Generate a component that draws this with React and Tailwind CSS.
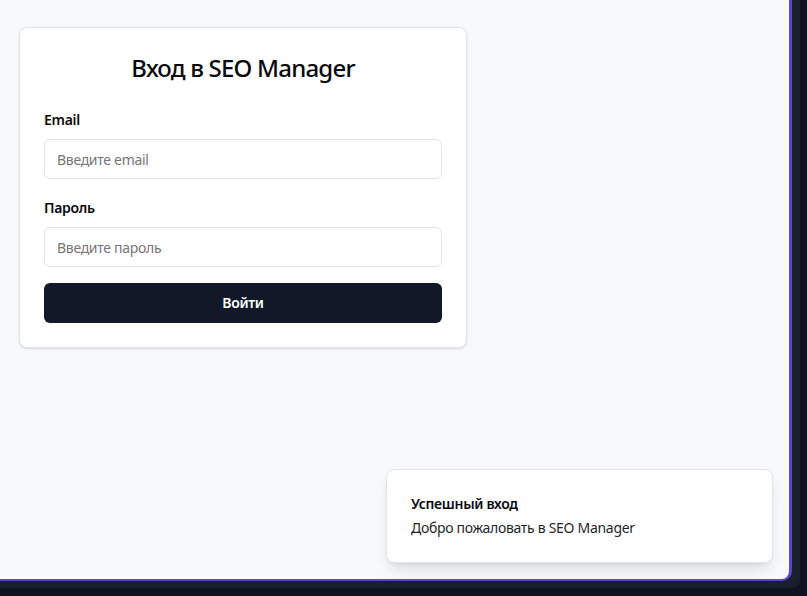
import React, { useState } from 'react';

const LoginPage = () => {
  const [email, setEmail] = useState('');
  const [password, setPassword] = useState('');

  return (
    <div className="w-[792px] h-[581px] relative bg-[#f8f9fb] border-r-[3px] border-b-2 border-[#5a45cf] rounded-br-[10px]">
      {/* Card */}
      <div className="ml-[19px] pt-[27px]">
        <div className="w-[448px] bg-white border border-[#e4e4e7] rounded-lg shadow-sm p-6">
          <h1 className="text-2xl leading-8 font-medium tracking-[-0.8px] text-center text-[#09090b] mb-[26px]">
            Вход в SEO Manager
          </h1>

          <form onSubmit={(e) => e.preventDefault()}>
            <label className="block text-sm leading-5 font-semibold text-[#09090b] mb-[9px]">Email</label>
            <input
              type="email"
              value={email}
              onChange={(e) => setEmail(e.target.value)}
              placeholder="Введите email"
              className="w-full h-10 px-3 text-sm rounded-md border border-[#e4e4e7] bg-white placeholder:text-[#7a7474] focus:outline-none"
            />

            <label className="block text-sm leading-5 font-semibold text-[#09090b] mt-[19px] mb-[9px]">Пароль</label>
            <input
              type="password"
              value={password}
              onChange={(e) => setPassword(e.target.value)}
              placeholder="Введите пароль"
              className="w-full h-10 px-3 text-sm rounded-md border border-[#e4e4e7] bg-white placeholder:text-[#7a7474] focus:outline-none"
            />

            <button
              type="submit"
              className="w-full h-10 mt-4 rounded-md bg-[#111827] text-white text-sm font-semibold"
            >
              Войти
            </button>
          </form>
        </div>
      </div>

      {/* Toast */}
      <div className="absolute right-4 bottom-4 w-[387px] bg-white border border-[#e4e4e7] rounded-lg shadow-lg p-6 pr-8">
        <div className="grid gap-1">
          <div className="text-sm leading-5 font-semibold text-[#09090b]">Успешный вход</div>
          <div className="text-sm leading-5 text-[#09090b] opacity-90">Добро пожаловать в SEO Manager</div>
        </div>
      </div>
    </div>
  );
};

export default function App() {
  return (
    <div className="w-full h-[596px] bg-[#0f1321] overflow-hidden tracking-[-0.3px] font-['Noto_Sans',sans-serif]">
      <div className="w-[800px] h-[588px] bg-[#1a1f2e] rounded-br-lg">
        <LoginPage />
      </div>
    </div>
  );
}
